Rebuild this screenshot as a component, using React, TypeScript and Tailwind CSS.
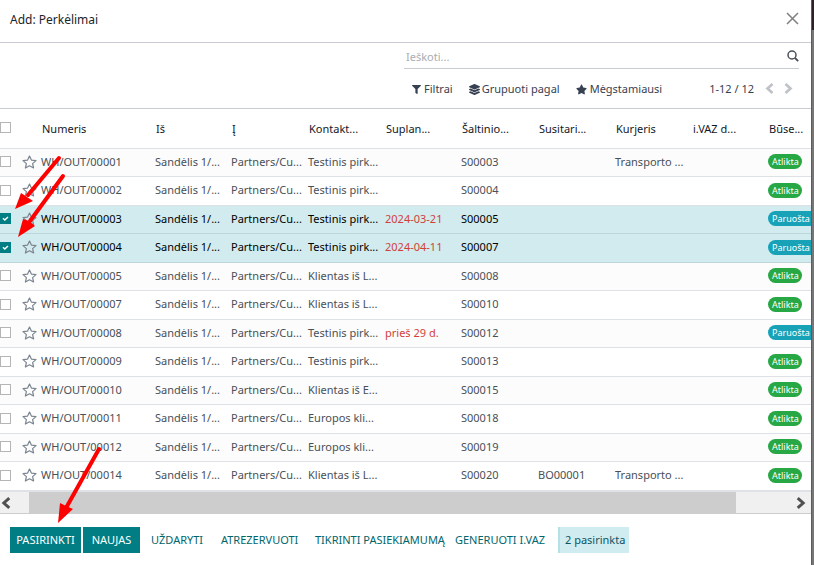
import React from "react";
import { FaFilter, FaLayerGroup, FaStar } from "react-icons/fa";

type Transfer = {
  number: string;
  contact: string;
  planned?: string;
  source: string;
  agreement?: string;
  courier?: string;
  ready?: boolean;
  selected?: boolean;
};

const transfers: Transfer[] = [
  { number: "WH/OUT/00001", contact: "Testinis pirk...", source: "S00003", courier: "Transporto ..." },
  { number: "WH/OUT/00002", contact: "Testinis pirk...", source: "S00004" },
  { number: "WH/OUT/00003", contact: "Testinis pirk...", planned: "2024-03-21", source: "S00005", ready: true, selected: true },
  { number: "WH/OUT/00004", contact: "Testinis pirk...", planned: "2024-04-11", source: "S00007", ready: true, selected: true },
  { number: "WH/OUT/00005", contact: "Klientas iš L...", source: "S00008" },
  { number: "WH/OUT/00007", contact: "Klientas iš L...", source: "S00010" },
  { number: "WH/OUT/00008", contact: "Testinis pirk...", planned: "prieš 29 d.", source: "S00012", ready: true },
  { number: "WH/OUT/00009", contact: "Testinis pirk...", source: "S00013" },
  { number: "WH/OUT/00010", contact: "Klientas iš E...", source: "S00015" },
  { number: "WH/OUT/00011", contact: "Europos kli...", source: "S00018" },
  { number: "WH/OUT/00012", contact: "Europos kli...", source: "S00019" },
  { number: "WH/OUT/00014", contact: "Klientas iš L...", source: "S00020", agreement: "BO00001", courier: "Transporto ..." },
];

const headers = ["Numeris", "Iš", "Į", "Kontakt...", "Suplan...", "Šaltinio...", "Susitari...", "Kurjeris", "i.VAZ d...", "Būse..."];

function Check({ label, checked }: { label: string; checked?: boolean }) {
  return (
    <label className="relative block size-[11px]">
      <input
        type="checkbox"
        aria-label={label}
        defaultChecked={checked}
        className="peer block size-[11px] appearance-none border border-[#b5b5b5] bg-white checked:border-[#017e84] checked:bg-[#017e84]"
      />
      <svg viewBox="0 0 11 11" className="pointer-events-none absolute inset-0 hidden size-[11px] peer-checked:block">
        <path d="M3 5.3 4.8 7 8 4" fill="none" stroke="#fff" strokeWidth="1.5" />
      </svg>
    </label>
  );
}

function Chevron({ right, size }: { right?: boolean; size: number }) {
  return (
    <svg width={size} height={size} viewBox="0 0 11 11" fill="none" stroke="currentColor" strokeWidth="2.7">
      <path d={right ? "M2.5 1 7.5 5.5 2.5 10" : "M8.5 1 3.5 5.5 8.5 10"} />
    </svg>
  );
}

function StarOutline() {
  return (
    <svg width="15" height="14" viewBox="0 0 15 14" fill="none" stroke="currentColor" strokeWidth="1.2" strokeLinejoin="round">
      <path d="M7.5 1 9.4 5.1 14 5.6 10.6 8.6 11.6 13 7.5 10.8 3.4 13 4.4 8.6 1 5.6 5.6 5.1Z" />
    </svg>
  );
}

function Arrows() {
  return (
    <svg className="pointer-events-none absolute top-0 left-0" width="130" height="540" viewBox="0 0 130 540" aria-hidden="true">
      <g stroke="#f00" strokeWidth="4" strokeLinecap="round">
        <path d="M59 158 28 195" />
        <path d="M63 176 30 221" />
        <path d="M99 449 66 508" />
      </g>
      <g fill="#f00">
        <path d="M15 209 21 193 27 197 33 201Z" />
        <path d="M18 237 23 219 29 221 35 226Z" />
        <path d="M58 523 60 503 66 506 73 509Z" />
      </g>
    </svg>
  );
}

export default function App() {
  return (
    <div className="relative flex min-h-screen bg-white font-['Noto_Sans',sans-serif] text-[11px] leading-4 text-[#495057]">
      <main className="min-w-0 flex-1 overflow-hidden">
        <header className="flex h-[43px] items-start justify-between border-b border-[#c9ccd2] pt-3 pr-3 pl-[10px]">
          <h1 className="text-[12px] text-[#212529]">Add: Perkėlimai</h1>
          <button aria-label="Uždaryti langą">
            <svg width="13" height="13" viewBox="0 0 13 13" fill="none" stroke="#7f7f7f" strokeWidth="1.5">
              <path d="M1 1 12 12M12 1 1 12" />
            </svg>
          </button>
        </header>

        <section className="flex h-[66px] flex-col items-end border-b border-[#c9ccd2] pr-3">
          <div className="flex h-[26px] w-[395px] items-center border-b border-[#c9ccd2]">
            <input
              type="search"
              aria-label="Ieškoti"
              placeholder="Ieškoti..."
              className="min-w-0 flex-1 px-[2px] pt-[3px] outline-none placeholder:text-[#a9adb3]"
            />
            <button aria-label="Vykdyti paiešką" className="text-[#495057]">
              <svg width="12" height="12" viewBox="0 0 12 12" fill="none" stroke="currentColor" strokeWidth="1.5">
                <circle cx="5" cy="5" r="4" />
                <path d="m8 8 3.2 3.2" strokeWidth="1.8" />
              </svg>
            </button>
          </div>
          <div className="flex w-[395px] items-center pt-3 pl-2 text-[#374151]">
            <button className="flex items-center gap-[3px]"><FaFilter size={9} />Filtrai</button>
            <button className="ml-4 flex items-center gap-[2px]"><FaLayerGroup size={11} />Grupuoti pagal</button>
            <button className="ml-4 flex items-center gap-[3px]"><FaStar size={11} />Mėgstamiausi</button>
            <span className="ml-auto">1-12 / 12</span>
            <button aria-label="Ankstesnis" className="ml-[10px] pb-[2px] text-[#bfc2c8]"><Chevron size={11} /></button>
            <button aria-label="Kitas" className="mr-[5px] ml-2 pb-[2px] text-[#bfc2c8]"><Chevron right size={11} /></button>
          </div>
        </section>

        <table className="w-full table-fixed border-separate border-spacing-0 whitespace-nowrap">
          <colgroup>
            <col className="w-[22px]" />
            <col className="w-[19px]" />
            <col className="w-[114px]" />
            <col className="w-[76px]" />
            <col className="w-[77px]" />
            <col className="w-[77px]" />
            <col className="w-[76px]" />
            <col className="w-[77px]" />
            <col className="w-[77px]" />
            <col className="w-[77px]" />
            <col className="w-[76px]" />
            <col />
          </colgroup>
          <thead>
            <tr className="h-10 text-left text-[#111827] *:border-b *:border-[#dee2e6] *:p-0 *:font-normal">
              <th><div className="pb-[2px]"><Check label="Pažymėti viską" /></div></th>
              <th />
              {headers.map((h) => (
                <th key={h} scope="col"><span className="pl-px">{h}</span></th>
              ))}
            </tr>
          </thead>
          <tbody>
            {transfers.map((t) => (
              <tr
                key={t.number}
                className={
                  "odd:h-[28px] even:h-[29px] *:border-b *:px-0 *:pt-0 *:pb-[2px] " +
                  (t.selected ? "bg-[#d1ebee] text-black *:border-[#bdd6da]" : "odd:bg-[#fcfcfc] *:border-[#dee2e6]")
                }
              >
                <td><Check label={t.number} checked={t.selected} /></td>
                <td>
                  <button aria-label="Mėgstamas" className="block text-[#7c8590]"><StarOutline /></button>
                </td>
                <td>{t.number}</td>
                <td>Sandėlis 1/...</td>
                <td>Partners/Cu...</td>
                <td>{t.contact}</td>
                <td className="text-[#d23f3a]">{t.planned}</td>
                <td>{t.source}</td>
                <td>{t.agreement}</td>
                <td>{t.courier}</td>
                <td />
                <td>
                  <span
                    className={
                      "block h-[15px] pl-1 text-[9px] leading-[16px] text-white " +
                      (t.ready ? "rounded-l-full bg-[#17a2b8]" : "w-[34px] rounded-full bg-[#28a745]")
                    }
                  >
                    {t.ready ? "Paruošta" : "Atlikta"}
                  </span>
                </td>
              </tr>
            ))}
          </tbody>
        </table>

        <div className="flex h-[23px] items-center border-t border-b border-t-[#dee2e6] border-b-[#cdcdcd] bg-[#f0f0f0] text-[#505050]">
          <button aria-label="Slinkti kairėn" className="flex w-[29px]"><Chevron size={12} /></button>
          <div className="h-full flex-1 bg-[#cdcdcd]" />
          <button aria-label="Slinkti dešinėn" className="flex w-[75px] justify-end pr-1"><Chevron right size={12} /></button>
        </div>

        <footer className="flex h-[51px] items-center pt-px pl-[10px] whitespace-nowrap text-[#01666b]">
          <button className="h-[26px] w-[71px] bg-[#017e84] text-white">PASIRINKTI</button>
          <button className="mr-[11px] ml-[2px] h-[26px] w-[57px] bg-[#017e84] text-white">NAUJAS</button>
          <button className="h-[26px] w-[70px] text-left">UŽDARYTI</button>
          <button className="h-[26px] w-[94px] text-left">ATREZERVUOTI</button>
          <button className="h-[26px] w-[140px] text-left">TIKRINTI PASIEKIAMUMĄ</button>
          <button className="h-[26px] w-[103px] text-left">GENERUOTI I.VAZ</button>
          <span className="h-[26px] w-[71px] border-l-2 border-[#b5e0e5] bg-[#d1ecf1] pl-[5px] leading-[26px] text-[#0c5460]">2 pasirinkta</span>
        </footer>
      </main>
      <aside className="w-[3px] border-l border-[#5c5c5c] bg-[#777777]">
        <div className="h-[30px] bg-[#2c2029]" />
      </aside>
      <Arrows />
    </div>
  );
}
